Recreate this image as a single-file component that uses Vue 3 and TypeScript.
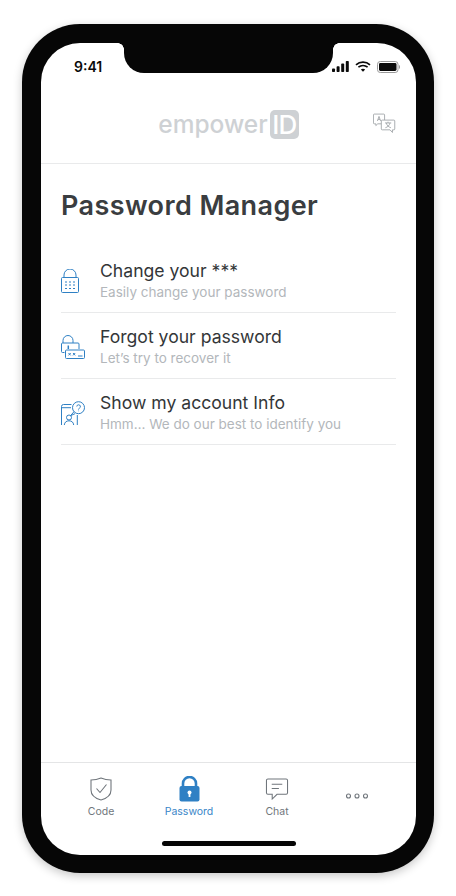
<script setup lang="ts">
const rows = [
  { key: 'lock', title: 'Change your ***', sub: 'Easily change your password' },
  { key: 'forgot', title: 'Forgot your password', sub: 'Let’s try to recover it' },
  { key: 'account', title: 'Show my account Info', sub: 'Hmm… We do our best to identify you' },
]
const tabs = [
  { key: 'code', label: 'Code' },
  { key: 'password', label: 'Password' },
  { key: 'chat', label: 'Chat' },
  { key: 'more', label: '' },
]
</script>

<template>
  <div class="page">
    <div class="phone">
      <div class="screen">
        <!-- notch over the status bar -->
        <div class="notch"></div>

        <div class="status">
          <span class="time">9:41</span>
          <span class="status-icons">
            <svg width="17" height="11" viewBox="0 0 17 11" fill="#0a0a0a">
              <rect x="0" y="7.5" width="3" height="3.5" rx="0.8" />
              <rect x="4.6" y="5.2" width="3" height="5.8" rx="0.8" />
              <rect x="9.2" y="2.6" width="3" height="8.4" rx="0.8" />
              <rect x="13.8" y="0" width="3" height="11" rx="0.8" />
            </svg>
            <svg width="16" height="11" viewBox="0 0 16 11" fill="none" stroke="#0a0a0a" stroke-width="1.7">
              <path d="M1 3.8C5 .2 11 .2 15 3.8" />
              <path d="M3.4 6.2c2.7-2.2 6.5-2.2 9.2 0" />
              <path d="M8 10.8 5.8 8.5c1.3-1 3.1-1 4.4 0Z" fill="#0a0a0a" stroke="none" />
            </svg>
            <svg width="23" height="12" viewBox="0 0 23 12" fill="none">
              <rect x="0.5" y="0.5" width="20.5" height="11" rx="2.8" stroke="#9a9a9a" />
              <rect x="2" y="2" width="17.5" height="8" rx="1.4" fill="#0a0a0a" />
              <path d="M22 4v4c.6-.2 1-1 1-2s-.4-1.8-1-2Z" fill="#9a9a9a" />
            </svg>
          </span>
        </div>

        <header class="header">
          <div class="logo">
            <span class="logo-word">empower</span><span class="logo-id">ID</span>
          </div>
          <svg class="translate" width="23" height="22" viewBox="0 0 26 24" fill="#fff" stroke="#a0a4a8" stroke-width="1">
            <path d="M1.5.8h10.6a1 1 0 0 1 1 1v9a1 1 0 0 1-1 1H5.4l-2.2 2v-2H1.5a1 1 0 0 1-1-1v-9a1 1 0 0 1 1-1Z" />
            <path d="M5 8.6 6.8 3.4 8.6 8.6M5.6 6.8H8" fill="none" />
            <path d="M10.4 7.6h13.2a1 1 0 0 1 1 1v9a1 1 0 0 1-1 1H22v3l-2.8-3h-8.8a1 1 0 0 1-1-1v-9a1 1 0 0 1 1-1Z" />
            <path d="M13.6 10.8h7M17 9.4v1.4M15 10.8c.5 2.6 2.6 4.6 5.2 5.4M19.2 10.8c-.5 2.6-2.4 4.6-5.2 5.4" fill="none" />
          </svg>
        </header>

        <main class="content">
          <h1 class="title">Password Manager</h1>
          <ul class="list">
            <li v-for="row in rows" :key="row.key" class="row">
              <span class="row-icon">
                <svg v-if="row.key === 'lock'" width="18" height="24" viewBox="0 0 18 24" fill="none" stroke="#2f80c4" stroke-width="1">
                  <path d="M3 8.5V6a6 6 0 0 1 12 0v2.500" />
                  <rect x="0.5" y="8.5" width="17" height="15" rx="1" />
                  <path d="M4 13h2M8 13h2M12 13h2M4 16h2M8 16h2M12 16h2M4 19.5h2M8 19.5h2M12 19.5h2" />
                </svg>
                <svg v-else-if="row.key === 'forgot'" width="24" height="24" viewBox="0 0 24 24" fill="none" stroke="#2f80c4" stroke-width="1">
                  <path d="M2 8V5.500a5 5 0 0 1 10 0V8" />
                  <path d="M3.500 17.500h-2a1 1 0 0 1-1-1V9a1 1 0 0 1 1-1H17a1 1 0 0 1 1 1v5" />
                  <path d="M7.300 10.500V14" stroke-width="1.500" />
                  <rect x="4.500" y="15" width="19" height="8.500" rx="1" />
                  <path d="M7.500 18l2.200 2.400M9.700 18l-2.200 2.400M12 18l2.200 2.400M14.200 18 12 20.400M17 21h4.500" />
                </svg>
                <svg v-else width="24" height="24" viewBox="0 0 24 24" fill="none" stroke="#2f80c4" stroke-width="1">
                  <path d="M.5 24V5.500a2 2 0 0 1 2-2h8M.5 6.700H10M16.300 14v10" />
                  <circle cx="17.500" cy="6.700" r="6" />
                  <path d="M13 10.700 9.500 14.700l4.500-2" />
                  <path d="M15.800 5.500a1.800 1.800 0 1 1 2.600 1.700c-.6.300-.9.700-.9 1.300M17.500 9.700v.5" />
                  <circle cx="8" cy="16.500" r="2.500" />
                  <path d="M3.300 24c.3-2.800 2-4.200 4.700-4.200s4.400 1.400 4.700 4.200" />
                </svg>
              </span>
              <span class="row-text">
                <span class="row-title">{{ row.title }}</span>
                <span class="row-sub">{{ row.sub }}</span>
              </span>
            </li>
          </ul>
        </main>

        <nav class="tabs">
          <div v-for="tab in tabs" :key="tab.key" class="tab" :class="{ on: tab.key === 'password' }">
            <span class="tab-icon">
              <svg v-if="tab.key === 'code'" width="22" height="24" viewBox="0 0 22 24" fill="none" stroke="#70767c" stroke-width="1.100">
                <path d="M11 1c3 1.300 6.500 2 10 2v10c0 5-4.500 8.500-10 10C5.500 21.500 1 18 1 13V3c3.500 0 7-.7 10-2Z" />
                <path d="M6.500 11.500 10 15.500 16.500 7.500" />
              </svg>
              <svg v-else-if="tab.key === 'password'" width="21" height="26" viewBox="0 0 21 26" fill="#2f80c4">
                <path d="M4 11V7.500a6.500 6.500 0 0 1 13 0V11" fill="none" stroke="#2f80c4" stroke-width="2.600" />
                <rect x="0.500" y="10" width="20" height="15.500" rx="2" />
                <circle cx="10.500" cy="16.500" r="2" fill="#fff" />
                <rect x="9.600" y="17" width="1.800" height="4" fill="#fff" />
              </svg>
              <svg v-else-if="tab.key === 'chat'" width="24" height="23" viewBox="0 0 24 24" fill="none" stroke="#70767c" stroke-width="1.100">
                <path d="M2.500 1h19A1.500 1.500 0 0 1 23 2.500v13a1.500 1.500 0 0 1-1.500 1.500H12l-5 5v-5H2.500A1.500 1.500 0 0 1 1 15.500v-13A1.500 1.500 0 0 1 2.500 1Z" />
                <path d="M6.500 6.500h11M6.500 11H14" />
              </svg>
              <svg v-else width="24" height="8" viewBox="0 0 24 8" fill="none" stroke="#70767c" stroke-width="1.100">
                <circle cx="3.500" cy="4" r="2" />
                <circle cx="12" cy="4" r="2" />
                <circle cx="20.500" cy="4" r="2" />
              </svg>
            </span>
            <span v-if="tab.label" class="tab-label">{{ tab.label }}</span>
          </div>
        </nav>

        <div class="home-bar"></div>
      </div>
    </div>
  </div>
</template>

<style scoped>
.page {
  height: 896px;
  padding: 24px 22px 0;
  box-sizing: border-box;
  font-family: Inter, "Noto Sans", sans-serif;
}
.phone {
  width: 412px;
  height: 849px;
  box-sizing: border-box;
  padding: 19px 18px 18px 19px;
  background: #060606;
  border-radius: 58px;
  box-shadow: 0 3px 10px rgba(0, 0, 0, 0.22);
}
.screen {
  position: relative;
  height: 812px;
  display: flex;
  flex-direction: column;
  background: #fff;
  border-radius: 39px;
  overflow: hidden;
}
.notch {
  position: absolute;
  top: 0;
  left: 83px;
  width: 209px;
  height: 30px;
  background: #060606;
  border-radius: 0 0 20px 20px;
}
.notch::before,
.notch::after {
  content: '';
  position: absolute;
  top: 0;
  width: 6px;
  height: 6px;
}
.notch::before {
  left: -6px;
  background: radial-gradient(circle at 0 100%, transparent 5.5px, #060606 6px);
}
.notch::after {
  right: -6px;
  background: radial-gradient(circle at 100% 100%, transparent 5.5px, #060606 6px);
}
.status {
  height: 44px;
  flex: none;
  display: flex;
  justify-content: space-between;
  align-items: center;
  padding: 3px 16px 0 33px;
  box-sizing: border-box;
}
.time {
  font-size: 14px;
  font-weight: 600;
  color: #0a0a0a;
}
.status-icons {
  display: flex;
  align-items: center;
  gap: 6px;
}
.header {
  position: relative;
  height: 76px;
  flex: none;
  display: flex;
  justify-content: center;
  align-items: flex-start;
  border-bottom: 1px solid #e9eaeb;
}
.logo {
  display: flex;
  align-items: center;
  gap: 2px;
  margin-top: 22px;
  color: #ced1d4;
}
.logo-word {
  font-size: 24.5px;
  font-weight: 500;
  line-height: 30px;
}
.logo-id {
  width: 29px;
  height: 29px;
  border-radius: 5px;
  background: #ced1d4;
  color: #fff;
  font-size: 26px;
  font-weight: 500;
  letter-spacing: -1px;
  line-height: 29px;
  text-align: center;
}
.translate {
  position: absolute;
  top: 26px;
  right: 20px;
}
.content {
  flex: 1;
  padding: 24px 20px 0;
}
.title {
  margin: 0 0 23px;
  font-size: 27px;
  font-weight: 600;
  line-height: 36px;
  color: #3a3d40;
  letter-spacing: 0.4px;
}
.list {
  margin: 0;
  padding: 0;
  list-style: none;
}
.row {
  display: flex;
  align-items: center;
  height: 65px;
  border-bottom: 1px solid #e9eaeb;
  box-sizing: content-box;
}
.row-icon {
  width: 39px;
  flex: none;
  display: flex;
  align-items: center;
  padding-top: 3px;
}
.row-text {
  display: flex;
  flex-direction: column;
  gap: 1px;
}
.row-title {
  font-size: 17.6px;
  line-height: 23px;
  color: #333638;
}
.row-sub {
  font-size: 13.5px;
  line-height: 18px;
  color: #b3b7bb;
}
.tabs {
  flex: none;
  height: 93px;
  box-sizing: border-box;
  border-top: 1px solid #e4e5e6;
  display: flex;
  padding: 12px 0 0 16px;
}
.tab {
  flex: 0 0 88px;
  display: flex;
  flex-direction: column;
  align-items: center;
  color: #70767c;
}
.tab:last-child {
  flex: 0 0 72px;
}
.tab:last-child .tab-icon {
  margin-top: 7px;
}
.tab.on {
  color: #3a86c8;
}
.tab-icon {
  height: 28px;
  display: flex;
  align-items: center;
  justify-content: center;
}
.tab-label {
  margin-top: 2px;
  font-size: 10.5px;
  line-height: 13px;
}
.home-bar {
  position: absolute;
  left: 121px;
  bottom: 9px;
  width: 134px;
  height: 5px;
  border-radius: 3px;
  background: #060606;
}
</style>
